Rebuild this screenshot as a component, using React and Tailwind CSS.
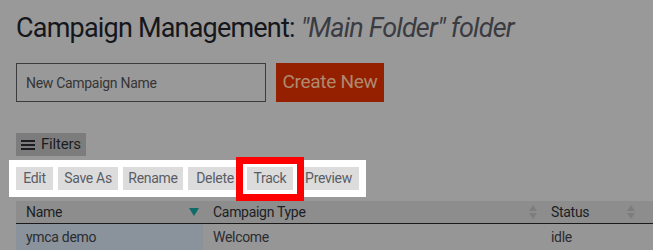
import React from 'react';

const SortBoth = () => (
  <svg width="8" height="16" viewBox="0 0 8 16" className="fill-[#7d7d7d]">
    <path d="M4 1 L8 7 L0 7 Z" />
    <path d="M4 15 L8 9 L0 9 Z" />
  </svg>
);

const SortDown = () => (
  <svg width="10" height="8" viewBox="0 0 10 8" className="fill-[#0f6b68]">
    <path d="M0 0 L10 0 L5 8 Z" />
  </svg>
);

const actions = [
  { label: 'Edit', w: 'w-[37px]' },
  { label: 'Save As', w: 'w-[60px]' },
  { label: 'Rename', w: 'w-[60px]' },
  { label: 'Delete', w: 'w-[54px]' },
  { label: 'Track', w: 'w-[46px]' },
  { label: 'Preview', w: 'w-[61px]' },
];

const App = () => {
  return (
    <div className="relative h-[250px] w-[653px] overflow-hidden bg-[#999999] font-['Roboto',sans-serif]">
      <h1 className="pl-4 pt-[14px] text-[27px] leading-[28px] tracking-[-0.8px] text-[#15171c]">
        Campaign Management: <span className="italic text-[#3b3c42]">"Main Folder" folder</span>
      </h1>

      <div className="mt-[21px] flex gap-[10px] pl-4">
        <input
          placeholder="New Campaign Name"
          className="h-[39px] w-[250px] border border-[#3c3c3c] bg-transparent px-[9px] text-[14px] tracking-[-0.3px] text-[#333] placeholder:text-[#353535] outline-none"
        />
        <button className="h-[39px] w-[108px] bg-[#952000] text-[19px] tracking-[-0.3px] text-[#ad8a70]">Create New</button>
      </div>

      <div className="mt-[31px] pl-4">
        <button className="flex h-[23px] w-[70px] items-center gap-[6px] bg-[#7c7c7c] px-[5px] text-[15px] tracking-[-0.2px] text-[#1b1d22]">
          <svg width="14" height="12" viewBox="0 0 14 12" className="fill-[#1b1d22]">
            <rect x="0" y="1" width="14" height="2" />
            <rect x="0" y="5" width="14" height="2" />
            <rect x="0" y="9" width="14" height="2" />
          </svg>
          Filters
        </button>
      </div>

      <div className="ml-[9px] mt-[4px] flex h-[37px] w-[357px] items-center gap-[5px] bg-white px-[7px]">
        {actions.map((a) => (
          <button
            key={a.label}
            className={`${a.w} h-[23px] shrink-0 whitespace-nowrap bg-[#dcdcdc] text-[14px] tracking-[-0.3px] text-[#5b5d66]`}
          >
            {a.label}
          </button>
        ))}
      </div>

      <div className="pointer-events-none absolute left-[236px] top-[157px] h-[44px] w-[68px] border-[7px] border-[#ff0000]" />

      <div className="ml-4 mt-[4px]">
        <div className="flex h-[23px] items-center border-b border-[#1a1a1a] bg-[#8d8d8d] text-[14px] tracking-[-0.3px] text-[#1c1e23]">
          <div className="flex w-[187px] items-center justify-between pl-[10px] pr-[4px]">
            <span>Name</span>
            <SortDown />
          </div>
          <div className="flex w-[338px] items-center justify-between pl-[10px] pr-[4px]">
            <span>Campaign Type</span>
            <SortBoth />
          </div>
          <div className="flex w-[100px] items-center justify-between pl-[10px] pr-[6px]">
            <span>Status</span>
            <SortBoth />
          </div>
          <div className="flex-1" />
        </div>
        <div className="flex h-[26px] items-center bg-[#969696] text-[14px] tracking-[-0.3px] text-[#2a2c31]">
          <div className="flex h-full w-[187px] items-center bg-[#8a939c] pl-[10px]">ymca demo</div>
          <div className="w-[338px] pl-[10px]">Welcome</div>
          <div className="w-[100px] pl-[10px]">idle</div>
        </div>
      </div>
    </div>
  );
};

export default App;
